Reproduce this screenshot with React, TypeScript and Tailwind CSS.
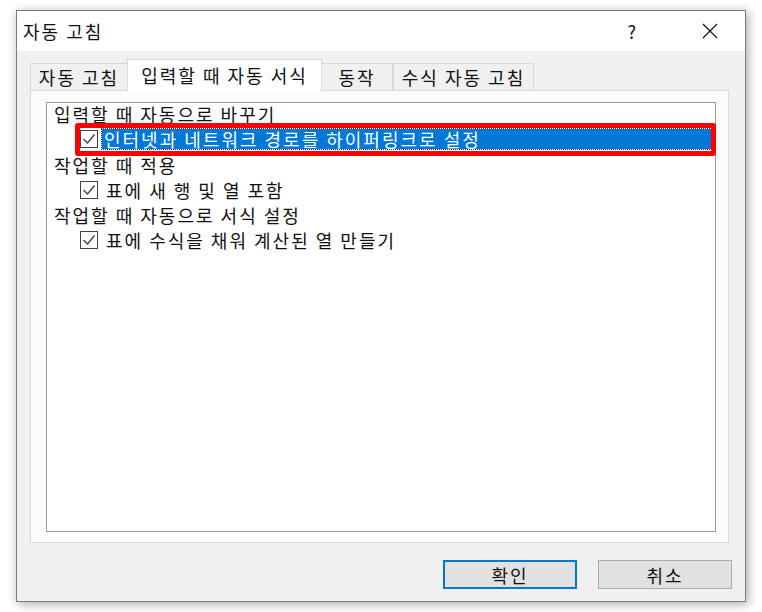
const font = { fontFamily: '"Noto Sans CJK KR", "Noto Sans", sans-serif' };

function CheckBox() {
  return (
    <span className="w-[18px] h-[18px] shrink-0 border border-[#444] bg-white flex items-center justify-center">
      <svg width="14" height="14" viewBox="0 0 14 14">
        <path d="M1.5 7 L5.5 11 L12.5 2.5" stroke="#444" strokeWidth="1.4" fill="none" />
      </svg>
    </span>
  );
}

function Tab({ label, active, w }: { label: string; active?: boolean; w: string }) {
  return (
    <div
      className={
        active
          ? `${w} h-[32px] -mb-px -mx-px z-10 bg-white border border-b-0 border-[#d9d9d9] flex items-center justify-center text-[18px]`
          : `${w} h-[27px] bg-[#f0f0f0] border border-b-0 border-[#d9d9d9] flex items-center justify-center text-[18px]`
      }
    >
      {label}
    </div>
  );
}

export default function App() {
  return (
    <div className="w-[762px] h-[612px] bg-white pl-[16px] pt-[10px] text-[#111] tracking-[2px]" style={font}>
      <div className="w-[730px] h-[592px] border border-[#7a7a7a] bg-[#f0f0f0] flex flex-col shadow-[2px_2px_10px_rgba(0,0,0,0.35)]">
        {/* title bar */}
        <div className="h-[40px] bg-white flex items-center pl-[6px] shrink-0">
          <span className="text-[18px] leading-none">자동 고침</span>
          <span className="ml-auto mr-[64px] text-[18px] leading-none">?</span>
          <svg width="16" height="16" viewBox="0 0 16 16" className="mr-[27px]">
            <path d="M1 1 L15 15 M15 1 L1 15" stroke="#111" strokeWidth="1.2" />
          </svg>
        </div>

        {/* tabs */}
        <div className="pl-[13px] pt-[8px] flex items-end">
          <Tab label="자동 고침" w="w-[98px]" />
          <Tab label="입력할 때 자동 서식" active w="w-[195px]" />
          <Tab label="동작" w="w-[72px]" />
          <Tab label="수식 자동 고침" w="w-[141px]" />
        </div>

        {/* tab panel */}
        <div className="ml-[13px] w-[699px] h-[453px] bg-[#fcfcfc] border border-[#d9d9d9] pl-[15px] pr-[12px] pt-[11px] pb-[10px]">
          <div className="h-full bg-white border border-[#9a9a9a] text-[18px] leading-none">
            <div className="h-[22px] flex items-center pl-[7px]">입력할 때 자동으로 바꾸기</div>
            <div className="relative h-[27px] flex items-center pl-[33px]">
              <CheckBox />
              <span className="ml-[4px] flex-1 mr-[4px] h-[20px] bg-[#0078d7] text-white flex items-center pl-[2px] outline-1 outline-dotted outline-[#333]">
                인터넷과 네트워크 경로를 하이퍼링크로 설정
              </span>
              <div className="absolute left-[28px] -right-px top-[-2px] bottom-[-4px] border-[5px] border-[#ff0000] rounded-[3px]" />
            </div>
            <div className="h-[25px] flex items-center pl-[7px]">작업할 때 적용</div>
            <div className="h-[25px] flex items-center pl-[33px]">
              <CheckBox />
              <span className="ml-[8px]">표에 새 행 및 열 포함</span>
            </div>
            <div className="h-[25px] flex items-center pl-[7px]">작업할 때 자동으로 서식 설정</div>
            <div className="h-[25px] flex items-center pl-[33px]">
              <CheckBox />
              <span className="ml-[8px]">표에 수식을 채워 계산된 열 만들기</span>
            </div>
          </div>
        </div>

        {/* buttons */}
        <div className="flex justify-end pr-[13px] pt-[17px] gap-[21px]">
          <button className="w-[134px] h-[29px] bg-[#e1e1e1] border-2 border-[#0078d7] text-[18px] leading-none flex items-center justify-center">
            확인
          </button>
          <button className="w-[134px] h-[29px] bg-[#e1e1e1] border border-[#adadad] text-[18px] leading-none flex items-center justify-center">
            취소
          </button>
        </div>
      </div>
    </div>
  );
}
